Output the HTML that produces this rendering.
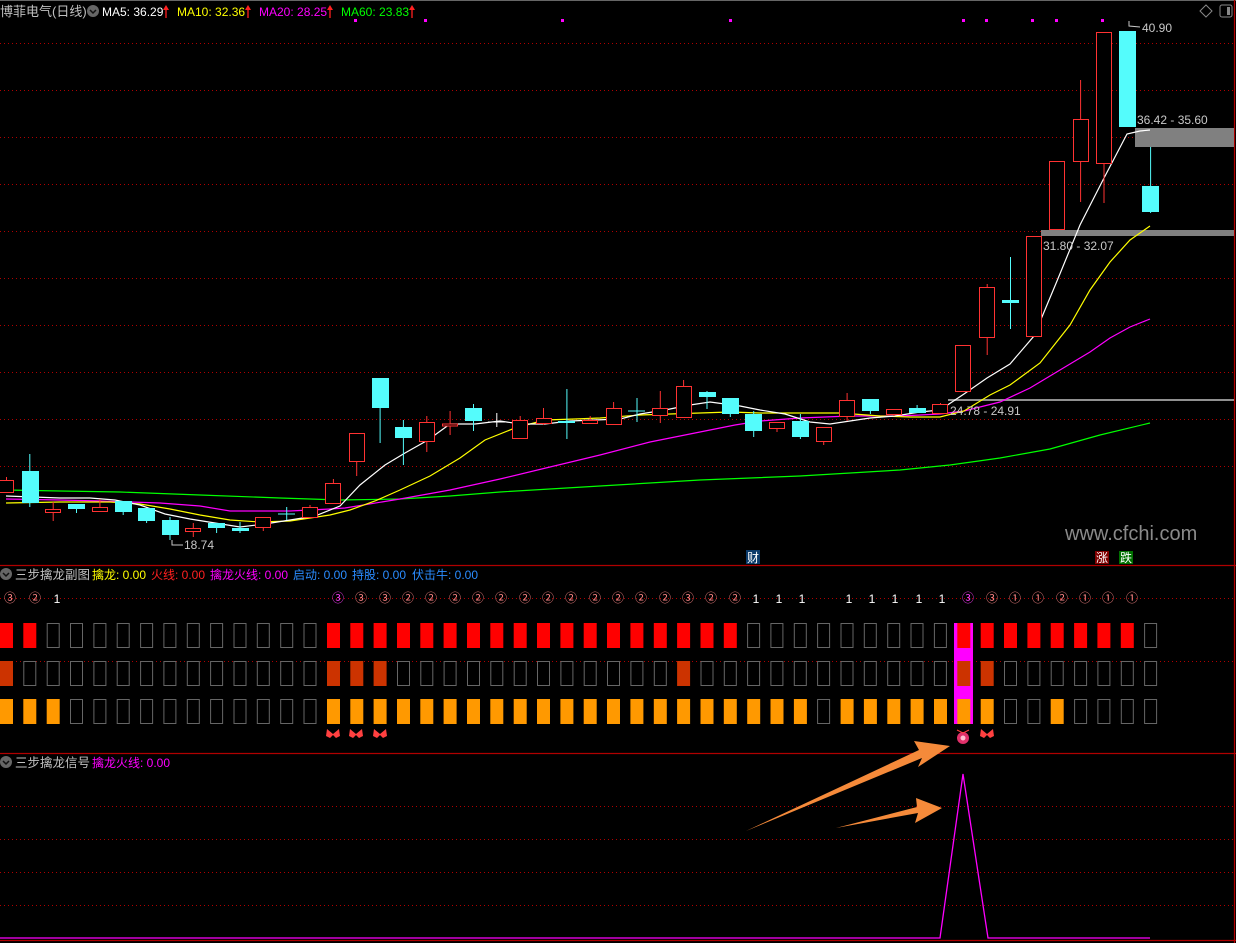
<!DOCTYPE html>
<html><head><meta charset="utf-8"><style>
html,body{margin:0;padding:0;background:#000;width:1236px;height:943px;overflow:hidden}
svg{display:block}
text{font-family:"Liberation Sans","Noto Sans CJK SC",sans-serif}
</style></head><body>
<svg width="1236" height="943" viewBox="0 0 1236 943" xmlns="http://www.w3.org/2000/svg">
<rect width="1236" height="943" fill="#000"/>
<line x1="0" y1="0.5" x2="1236" y2="0.5" stroke="#666"/>
<g stroke="#b00000" stroke-dasharray="1,3">
<line x1="0" y1="43.5" x2="1234" y2="43.5"/><line x1="0" y1="90.5" x2="1234" y2="90.5"/>
<line x1="0" y1="137.5" x2="1234" y2="137.5"/><line x1="0" y1="184.5" x2="1234" y2="184.5"/>
<line x1="0" y1="231.5" x2="1234" y2="231.5"/><line x1="0" y1="278.5" x2="1234" y2="278.5"/>
<line x1="0" y1="325.5" x2="1234" y2="325.5"/><line x1="0" y1="372.5" x2="1234" y2="372.5"/>
<line x1="0" y1="419.5" x2="1234" y2="419.5"/><line x1="0" y1="466.5" x2="1234" y2="466.5"/>
<line x1="0" y1="598.5" x2="1234" y2="598.5"/><line x1="0" y1="661.5" x2="1234" y2="661.5"/>
<line x1="0" y1="806.5" x2="1234" y2="806.5"/><line x1="0" y1="839.5" x2="1234" y2="839.5"/>
<line x1="0" y1="872.5" x2="1234" y2="872.5"/><line x1="0" y1="905.5" x2="1234" y2="905.5"/>
</g>
<g stroke="#b00000" stroke-width="1.2">
<line x1="0" y1="565.5" x2="1236" y2="565.5"/><line x1="0" y1="753.5" x2="1236" y2="753.5"/>
<line x1="0" y1="940.5" x2="1236" y2="940.5"/><line x1="1234.5" y1="0" x2="1234.5" y2="943"/>
</g>
<rect x="1135" y="128" width="99" height="19" fill="#808080"/>
<rect x="1041" y="230" width="193" height="6" fill="#808080"/>
<rect x="948" y="399" width="286" height="2" fill="#909090"/>
<g fill="none" stroke-width="1.2">
<polyline stroke="#00ff00" points="6,490 60,491 120,492 200,495 280,498 340,500 400,499 450,496 500,492 600,486 700,480 800,476 900,470 950,465 1000,458 1050,449 1100,435 1150,423"/>
<polyline stroke="#ff00ff" points="6,499 60,500 100,501 160,503 200,506 230,511 290,511 330,509 345,508 400,499 450,490 500,479 550,467 600,455 650,442 700,432 735,425 760,421 800,418 850,416 900,416 940,414 964,411 1000,402 1030,388 1060,370 1090,352 1110,338 1130,327 1150,319"/>
<polyline stroke="#ffff00" points="6,503 60,502 110,502 140,504 170,509 200,515 230,520 260,522 290,521 310,518 330,515 350,510 375,501 400,490 430,476 460,458 485,440 515,428 545,420 575,419 600,418 640,415 670,414 700,413 730,412 760,413 800,413 840,413 880,416 910,417 940,417 964,411 990,395 1010,385 1040,363 1070,325 1090,290 1110,262 1130,240 1150,226"/>
<polyline stroke="#ffffff" points="6,496 60,498 90,498 115,500 140,505 165,514 190,519 215,523 240,527 265,524 290,520 315,516 340,506 360,485 385,465 405,453 428,440 450,424 475,424 500,421 520,424 545,424 570,421 595,420 620,419 640,414 665,410 690,405 710,402 740,406 760,410 785,414 810,422 830,424 850,421 870,418 895,416 920,412 940,410 964,394 987,378 1010,364 1034,336 1057,281 1080,225 1104,178 1127,134 1140,131 1150,130"/>
</g>
<g stroke="#ff3232" fill="#000" stroke-width="1">
<line x1="6.5" y1="477" x2="6.5" y2="480"/><rect x="-1.5" y="480.5" width="15" height="12"/>
<line x1="53.2" y1="502" x2="53.2" y2="521"/><rect x="45.5" y="509.5" width="15" height="3"/>
<line x1="99.9" y1="499" x2="99.9" y2="507"/><rect x="92.5" y="507.5" width="15" height="4"/>
<line x1="193.3" y1="523" x2="193.3" y2="537"/><rect x="185.5" y="528.5" width="15" height="3"/>
<line x1="263.3" y1="527" x2="263.3" y2="531"/><rect x="255.5" y="517.5" width="15" height="10"/>
<line x1="310" y1="505" x2="310" y2="507"/><rect x="302.5" y="507.5" width="15" height="10"/>
<line x1="333.4" y1="479" x2="333.4" y2="483"/><rect x="325.5" y="483.5" width="15" height="20"/>
<line x1="356.7" y1="461" x2="356.7" y2="476"/><rect x="349.5" y="433.5" width="15" height="28"/>
<line x1="426.8" y1="416" x2="426.8" y2="452"/><rect x="419.5" y="422.5" width="15" height="19"/>
<line x1="450.1" y1="411" x2="450.1" y2="435"/><rect x="442.5" y="424" width="15" height="2"/>
<line x1="520.2" y1="416" x2="520.2" y2="420"/><rect x="512.5" y="420.5" width="15" height="18"/>
<line x1="543.5" y1="408" x2="543.5" y2="425"/><rect x="536.5" y="418.5" width="15" height="5"/>
<line x1="590.2" y1="416" x2="590.2" y2="420"/><rect x="582.5" y="420.5" width="15" height="3"/>
<line x1="613.6" y1="402" x2="613.6" y2="408"/><rect x="606.5" y="408.5" width="15" height="16"/>
<line x1="660.3" y1="391" x2="660.3" y2="423"/><rect x="652.5" y="408.5" width="15" height="7"/>
<line x1="683.6" y1="380" x2="683.6" y2="386"/><rect x="676.5" y="386.5" width="15" height="31"/>
<line x1="777" y1="428" x2="777" y2="432"/><rect x="769.5" y="422.5" width="15" height="6"/>
<line x1="823.7" y1="441" x2="823.7" y2="445"/><rect x="816.5" y="427.5" width="15" height="14"/>
<line x1="847.1" y1="393" x2="847.1" y2="421"/><rect x="839.5" y="400.5" width="15" height="16"/>
<line x1="893.8" y1="414" x2="893.8" y2="416"/><rect x="886.5" y="409.5" width="15" height="5"/>
<line x1="940.5" y1="403" x2="940.5" y2="404"/><rect x="932.5" y="404.5" width="15" height="9"/>
<rect x="955.5" y="345.5" width="15" height="46"/>
<line x1="987.2" y1="284" x2="987.2" y2="355"/><rect x="979.5" y="287.5" width="15" height="50"/>
<rect x="1026.5" y="236.5" width="15" height="100"/>
<rect x="1049.5" y="161.5" width="15" height="68"/>
<line x1="1080.6" y1="80" x2="1080.6" y2="202"/><rect x="1073.5" y="119.5" width="15" height="42"/>
<line x1="1104" y1="163" x2="1104" y2="203"/><rect x="1096.5" y="32.5" width="15" height="131"/>
</g>
<g fill="#54fcfc" stroke="#54fcfc">
<line x1="29.8" y1="454" x2="29.8" y2="507"/><rect x="22" y="471" width="17" height="32" stroke="none"/>
<line x1="76.5" y1="504" x2="76.5" y2="513"/><rect x="68" y="504" width="17" height="5" stroke="none"/>
<line x1="123.2" y1="501" x2="123.2" y2="515"/><rect x="115" y="501" width="17" height="11" stroke="none"/>
<line x1="146.6" y1="508" x2="146.6" y2="523"/><rect x="138" y="508" width="17" height="13" stroke="none"/>
<line x1="170" y1="517" x2="170" y2="540"/><rect x="162" y="520" width="17" height="15" stroke="none"/>
<line x1="216.6" y1="523" x2="216.6" y2="533"/><rect x="208" y="523" width="17" height="5" stroke="none"/>
<line x1="240" y1="522" x2="240" y2="533"/><rect x="232" y="528" width="17" height="3" stroke="none"/>
<line x1="286.7" y1="507" x2="286.7" y2="520"/><line x1="278" y1="514" x2="295" y2="514"/>
<line x1="380.1" y1="378" x2="380.1" y2="443"/><rect x="372" y="378" width="17" height="30" stroke="none"/>
<line x1="403.4" y1="420" x2="403.4" y2="465"/><rect x="395" y="427" width="17" height="11" stroke="none"/>
<line x1="473.5" y1="404" x2="473.5" y2="431"/><rect x="465" y="408" width="17" height="13" stroke="none"/>
<line x1="566.9" y1="389" x2="566.9" y2="439"/><rect x="558" y="421" width="17" height="2" stroke="none"/>
<line x1="637" y1="398" x2="637" y2="422"/><line x1="628" y1="411" x2="645" y2="411"/>
<line x1="707" y1="391" x2="707" y2="409"/><rect x="699" y="392" width="17" height="5" stroke="none"/>
<line x1="730.3" y1="398" x2="730.3" y2="417"/><rect x="722" y="398" width="17" height="16" stroke="none"/>
<line x1="753.7" y1="411" x2="753.7" y2="437"/><rect x="745" y="414" width="17" height="17" stroke="none"/>
<line x1="800.4" y1="414" x2="800.4" y2="439"/><rect x="792" y="421" width="17" height="16" stroke="none"/>
<line x1="870.4" y1="399" x2="870.4" y2="414"/><rect x="862" y="399" width="17" height="12" stroke="none"/>
<line x1="917.1" y1="405" x2="917.1" y2="413"/><rect x="909" y="408" width="17" height="5" stroke="none"/>
<line x1="1010.5" y1="257" x2="1010.5" y2="329"/><rect x="1002" y="300" width="17" height="3" stroke="none"/>
<rect x="1119" y="31" width="17" height="96" stroke="none"/>
<line x1="1150.6" y1="147" x2="1150.6" y2="213"/><rect x="1142" y="186" width="17" height="26" stroke="none"/>
</g>
<g stroke="#fff"><line x1="496.8" y1="413" x2="496.8" y2="427"/><line x1="488" y1="422" x2="505" y2="422"/></g>
<g fill="#ff00ff"><rect x="354" y="19" width="3" height="3"/><rect x="424" y="19" width="3" height="3"/><rect x="561" y="19" width="3" height="3"/><rect x="729" y="19" width="3" height="3"/><rect x="962" y="19" width="3" height="3"/><rect x="985" y="19" width="3" height="3"/><rect x="1031" y="19" width="3" height="3"/><rect x="1055" y="19" width="3" height="3"/><rect x="1101" y="19" width="3" height="3"/></g>
<g fill="#c8c8c8" font-size="12">
<text x="1142" y="32">40.90</text>
<path d="M1129 21 L1129 26 L1140 27" stroke="#c8c8c8" fill="none"/>
<text x="1137" y="124">36.42 - 35.60</text>
<text x="1043" y="250">31.80 - 32.07</text>
<text x="950" y="415">24.78 - 24.91</text>
<text x="184" y="549">18.74</text>
<path d="M172 540 L172 545 L183 545" stroke="#c8c8c8" fill="none"/>
</g>
<path d="M1206 5 L1212 11 L1206 17 L1200 11 Z" stroke="#888" fill="none"/>
<rect x="1220" y="5" width="12" height="12" rx="2" stroke="#888" fill="none"/><rect x="1227" y="7" width="3" height="8" fill="#888"/>
<text x="1065" y="540" font-size="20" fill="#8a8a8a">www.cfchi.com</text>
<rect x="746" y="550" width="14" height="14" fill="#0a3a6a"/><text x="747" y="562" font-size="12" fill="#fff">财</text>
<rect x="1095" y="551" width="14" height="13" fill="#800000"/><text x="1096" y="562" font-size="12" fill="#fff">涨</text>
<rect x="1119" y="551" width="14" height="13" fill="#007000"/><text x="1120" y="562" font-size="12" fill="#fff">跌</text>
<g font-size="12">
<text x="0" y="16" fill="#c0c0c0" font-size="13">博菲电气(日线)</text>
<circle cx="93" cy="11" r="6" fill="#666"/><path d="M90 10 L93 13 L96 10" stroke="#111" stroke-width="1.5" fill="none"/>
<text x="102" y="16" fill="#fff">MA5: 36.29</text>
<text x="177" y="16" fill="#ffff00">MA10: 32.36</text>
<text x="259" y="16" fill="#ff00ff">MA20: 28.25</text>
<text x="341" y="16" fill="#00ff00">MA60: 23.83</text>
</g>
<g stroke="#ff2020" stroke-width="1.3" fill="#ff2020">
<line x1="166" y1="7" x2="166" y2="18"/><path d="M163 10 L166 5 L169 10 Z" stroke="none"/>
<line x1="248" y1="7" x2="248" y2="18"/><path d="M245 10 L248 5 L251 10 Z" stroke="none"/>
<line x1="330" y1="7" x2="330" y2="18"/><path d="M327 10 L330 5 L333 10 Z" stroke="none"/>
<line x1="412" y1="7" x2="412" y2="18"/><path d="M409 10 L412 5 L415 10 Z" stroke="none"/>
</g>
<g font-size="12">
<circle cx="6" cy="574" r="6" fill="#666"/><path d="M3 573 L6 576 L9 573" stroke="#111" stroke-width="1.5" fill="none"/>
<text x="15" y="579" fill="#c0c0c0" font-size="12.5">三步擒龙副图</text>
<text x="92" y="579" fill="#ffff00">擒龙: 0.00</text>
<text x="151" y="579" fill="#ff2020">火线: 0.00</text>
<text x="210" y="579" fill="#ff00ff">擒龙火线: 0.00</text>
<text x="293" y="579" fill="#2a8cff">启动: 0.00</text>
<text x="352" y="579" fill="#2a8cff">持股: 0.00</text>
<text x="412" y="579" fill="#2a8cff">伏击牛: 0.00</text>
<circle cx="6" cy="762" r="6" fill="#666"/><path d="M3 761 L6 764 L9 761" stroke="#111" stroke-width="1.5" fill="none"/>
<text x="15" y="767" fill="#c0c0c0" font-size="12.5">三步擒龙信号</text>
<text x="92" y="767" fill="#ff00ff">擒龙火线: 0.00</text>
</g>
<rect x="954" y="623" width="19" height="101" fill="#ff00ff"/>
<g fill="#ff0000">
<rect x="0" y="623" width="13" height="25"/><rect x="23.3" y="623" width="13" height="25"/>
<rect x="327" y="623" width="13" height="25"/><rect x="350.3" y="623" width="13" height="25"/><rect x="373.6" y="623" width="13" height="25"/><rect x="397" y="623" width="13" height="25"/><rect x="420.3" y="623" width="13" height="25"/><rect x="443.6" y="623" width="13" height="25"/><rect x="467" y="623" width="13" height="25"/><rect x="490.3" y="623" width="13" height="25"/><rect x="513.7" y="623" width="13" height="25"/><rect x="537" y="623" width="13" height="25"/><rect x="560.4" y="623" width="13" height="25"/><rect x="583.7" y="623" width="13" height="25"/><rect x="607" y="623" width="13" height="25"/><rect x="630.4" y="623" width="13" height="25"/><rect x="653.8" y="623" width="13" height="25"/><rect x="677.1" y="623" width="13" height="25"/><rect x="700.5" y="623" width="13" height="25"/><rect x="723.8" y="623" width="13" height="25"/>
<rect x="957.3" y="623" width="13" height="25"/><rect x="980.7" y="623" width="13" height="25"/><rect x="1004" y="623" width="13" height="25"/><rect x="1027.4" y="623" width="13" height="25"/><rect x="1050.7" y="623" width="13" height="25"/><rect x="1074.1" y="623" width="13" height="25"/><rect x="1097.4" y="623" width="13" height="25"/><rect x="1120.8" y="623" width="13" height="25"/>
</g>
<g fill="none" stroke="#666">
<rect x="47.2" y="623.5" width="12" height="24"/><rect x="70.5" y="623.5" width="12" height="24"/><rect x="93.9" y="623.5" width="12" height="24"/><rect x="117.2" y="623.5" width="12" height="24"/><rect x="140.6" y="623.5" width="12" height="24"/><rect x="163.9" y="623.5" width="12" height="24"/><rect x="187.3" y="623.5" width="12" height="24"/><rect x="210.6" y="623.5" width="12" height="24"/><rect x="234" y="623.5" width="12" height="24"/><rect x="257.3" y="623.5" width="12" height="24"/><rect x="280.7" y="623.5" width="12" height="24"/><rect x="304" y="623.5" width="12" height="24"/>
<rect x="747.6" y="623.5" width="12" height="24"/><rect x="770.9" y="623.5" width="12" height="24"/><rect x="794.3" y="623.5" width="12" height="24"/><rect x="817.6" y="623.5" width="12" height="24"/><rect x="841" y="623.5" width="12" height="24"/><rect x="864.3" y="623.5" width="12" height="24"/><rect x="887.7" y="623.5" width="12" height="24"/><rect x="911" y="623.5" width="12" height="24"/><rect x="934.4" y="623.5" width="12" height="24"/><rect x="1144.6" y="623.5" width="12" height="24"/>
</g>
<g fill="#cc3300">
<rect x="0" y="661" width="13" height="25"/><rect x="327" y="661" width="13" height="25"/><rect x="350.3" y="661" width="13" height="25"/><rect x="373.6" y="661" width="13" height="25"/><rect x="677.1" y="661" width="13" height="25"/><rect x="957.3" y="661" width="13" height="25"/><rect x="980.7" y="661" width="13" height="25"/>
</g>
<g fill="none" stroke="#666">
<rect x="23.8" y="661.5" width="12" height="24"/><rect x="47.2" y="661.5" width="12" height="24"/><rect x="70.5" y="661.5" width="12" height="24"/><rect x="93.9" y="661.5" width="12" height="24"/><rect x="117.2" y="661.5" width="12" height="24"/><rect x="140.6" y="661.5" width="12" height="24"/><rect x="163.9" y="661.5" width="12" height="24"/><rect x="187.3" y="661.5" width="12" height="24"/><rect x="210.6" y="661.5" width="12" height="24"/><rect x="234" y="661.5" width="12" height="24"/><rect x="257.3" y="661.5" width="12" height="24"/><rect x="280.7" y="661.5" width="12" height="24"/><rect x="304" y="661.5" width="12" height="24"/>
<rect x="397.5" y="661.5" width="12" height="24"/><rect x="420.8" y="661.5" width="12" height="24"/><rect x="444.1" y="661.5" width="12" height="24"/><rect x="467.5" y="661.5" width="12" height="24"/><rect x="490.8" y="661.5" width="12" height="24"/><rect x="514.2" y="661.5" width="12" height="24"/><rect x="537.5" y="661.5" width="12" height="24"/><rect x="560.9" y="661.5" width="12" height="24"/><rect x="584.2" y="661.5" width="12" height="24"/><rect x="607.5" y="661.5" width="12" height="24"/><rect x="630.9" y="661.5" width="12" height="24"/><rect x="654.3" y="661.5" width="12" height="24"/><rect x="701" y="661.5" width="12" height="24"/><rect x="724.3" y="661.5" width="12" height="24"/>
<rect x="747.6" y="661.5" width="12" height="24"/><rect x="770.9" y="661.5" width="12" height="24"/><rect x="794.3" y="661.5" width="12" height="24"/><rect x="817.6" y="661.5" width="12" height="24"/><rect x="841" y="661.5" width="12" height="24"/><rect x="864.3" y="661.5" width="12" height="24"/><rect x="887.7" y="661.5" width="12" height="24"/><rect x="911" y="661.5" width="12" height="24"/><rect x="934.4" y="661.5" width="12" height="24"/>
<rect x="1004.5" y="661.5" width="12" height="24"/><rect x="1027.9" y="661.5" width="12" height="24"/><rect x="1051.2" y="661.5" width="12" height="24"/><rect x="1074.6" y="661.5" width="12" height="24"/><rect x="1097.9" y="661.5" width="12" height="24"/><rect x="1121.3" y="661.5" width="12" height="24"/><rect x="1144.6" y="661.5" width="12" height="24"/>
</g>
<g fill="#ff9900">
<rect x="0" y="699" width="13" height="25"/><rect x="23.3" y="699" width="13" height="25"/><rect x="46.7" y="699" width="13" height="25"/>
<rect x="327" y="699" width="13" height="25"/><rect x="350.3" y="699" width="13" height="25"/><rect x="373.6" y="699" width="13" height="25"/><rect x="397" y="699" width="13" height="25"/><rect x="420.3" y="699" width="13" height="25"/><rect x="443.6" y="699" width="13" height="25"/><rect x="467" y="699" width="13" height="25"/><rect x="490.3" y="699" width="13" height="25"/><rect x="513.7" y="699" width="13" height="25"/><rect x="537" y="699" width="13" height="25"/><rect x="560.4" y="699" width="13" height="25"/><rect x="583.7" y="699" width="13" height="25"/><rect x="607" y="699" width="13" height="25"/><rect x="630.4" y="699" width="13" height="25"/><rect x="653.8" y="699" width="13" height="25"/><rect x="677.1" y="699" width="13" height="25"/><rect x="700.5" y="699" width="13" height="25"/><rect x="723.8" y="699" width="13" height="25"/><rect x="747.2" y="699" width="13" height="25"/><rect x="770.5" y="699" width="13" height="25"/><rect x="793.9" y="699" width="13" height="25"/>
<rect x="840.6" y="699" width="13" height="25"/><rect x="863.9" y="699" width="13" height="25"/><rect x="887.3" y="699" width="13" height="25"/><rect x="910.6" y="699" width="13" height="25"/><rect x="934" y="699" width="13" height="25"/><rect x="957.3" y="699" width="13" height="25"/><rect x="980.7" y="699" width="13" height="25"/><rect x="1050.7" y="699" width="13" height="25"/>
</g>
<g fill="none" stroke="#666">
<rect x="70.5" y="699.5" width="12" height="24"/><rect x="93.9" y="699.5" width="12" height="24"/><rect x="117.2" y="699.5" width="12" height="24"/><rect x="140.6" y="699.5" width="12" height="24"/><rect x="163.9" y="699.5" width="12" height="24"/><rect x="187.3" y="699.5" width="12" height="24"/><rect x="210.6" y="699.5" width="12" height="24"/><rect x="234" y="699.5" width="12" height="24"/><rect x="257.3" y="699.5" width="12" height="24"/><rect x="280.7" y="699.5" width="12" height="24"/><rect x="304" y="699.5" width="12" height="24"/>
<rect x="817.6" y="699.5" width="12" height="24"/><rect x="1004.5" y="699.5" width="12" height="24"/><rect x="1027.9" y="699.5" width="12" height="24"/><rect x="1074.6" y="699.5" width="12" height="24"/><rect x="1097.9" y="699.5" width="12" height="24"/><rect x="1121.3" y="699.5" width="12" height="24"/><rect x="1144.6" y="699.5" width="12" height="24"/>
</g>
<g font-size="12" text-anchor="middle" fill="#ff8888">
<text x="10" y="602">③</text><text x="35" y="602">②</text><text x="57" y="603" fill="#fff">1</text>
<text x="338" y="602" fill="#ff40ff">③</text><text x="361" y="602">③</text><text x="385" y="602">③</text><text x="408" y="602">②</text><text x="431" y="602">②</text><text x="455" y="602">②</text><text x="478" y="602">②</text><text x="501" y="602">②</text><text x="525" y="602">②</text><text x="548" y="602">②</text><text x="571" y="602">②</text><text x="595" y="602">②</text><text x="618" y="602">②</text><text x="641" y="602">②</text><text x="665" y="602">②</text><text x="688" y="602">③</text><text x="711" y="602">②</text><text x="735" y="602">②</text>
<text x="756" y="603" fill="#fff">1</text><text x="779" y="603" fill="#fff">1</text><text x="802" y="603" fill="#fff">1</text>
<text x="849" y="603" fill="#fff">1</text><text x="872" y="603" fill="#fff">1</text><text x="895" y="603" fill="#fff">1</text><text x="919" y="603" fill="#fff">1</text><text x="942" y="603" fill="#fff">1</text>
<text x="968" y="602" fill="#ff40ff">③</text><text x="992" y="602">③</text><text x="1015" y="602">①</text><text x="1038" y="602">①</text><text x="1062" y="602">②</text><text x="1085" y="602">①</text><text x="1108" y="602">①</text><text x="1132" y="602">①</text>
</g>
<g fill="#ff4040">
<path d="M333 734 L327 729 L326 736 L330 738 L333 735 L336 738 L340 736 L339 729 Z"/>
<path d="M356 734 L350 729 L349 736 L353 738 L356 735 L359 738 L363 736 L362 729 Z"/>
<path d="M380 734 L374 729 L373 736 L377 738 L380 735 L383 738 L387 736 L386 729 Z"/>
<path d="M987 734 L981 729 L980 736 L984 738 L987 735 L990 738 L994 736 L993 729 Z"/>
<circle cx="963" cy="738" r="6" fill="#e0306a"/><circle cx="963" cy="738" r="2.5" fill="#ffc0d0"/>
<path d="M957 730 L963 733 L969 730" stroke="#ff4040" fill="none"/>
</g>
<g fill="#f58a3a">
<polygon points="746,831 922,758 918,767 950,746 914,741 919,750"/>
<poloygon/>
<polygon points="836,828 918,813 915,823 942,808 916,798 917,807"/>
</g>
<polyline fill="none" stroke="#ff00ff" stroke-width="1.3" points="0,938 940,938 963,774 988,938 1150,938"/>
</svg>
</body></html>
